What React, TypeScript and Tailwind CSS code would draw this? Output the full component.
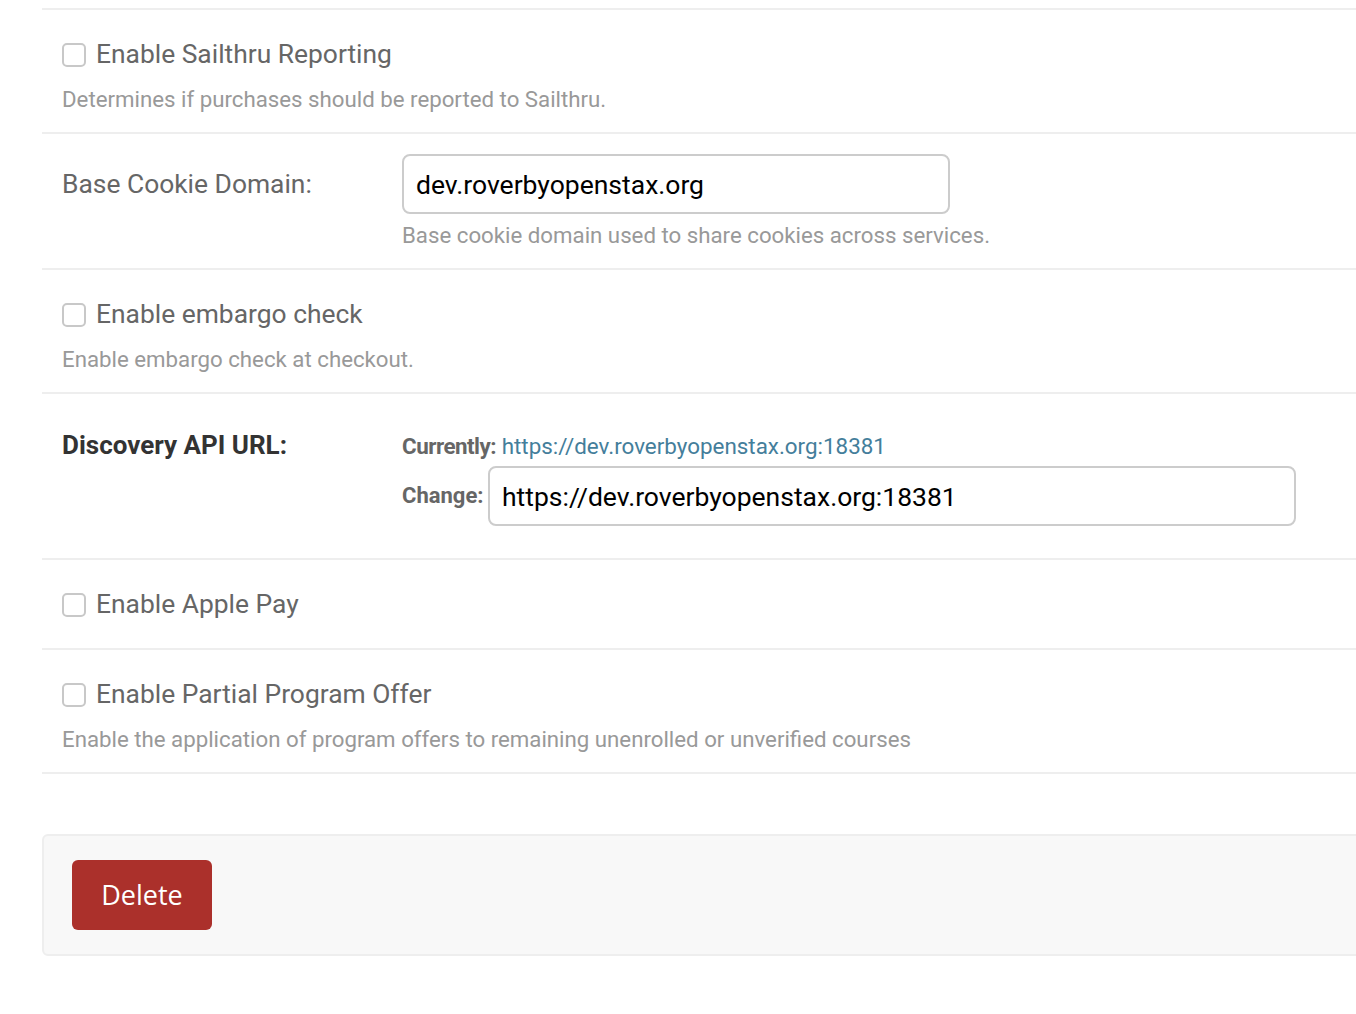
const font = { fontFamily: 'Roboto, "Liberation Sans", sans-serif' }

const Checkbox = () => (
  <span className="inline-block w-[24px] h-[24px] shrink-0 rounded-[5px] border-2 border-[#c8c8c8] bg-white" />
)

const CheckRow = ({ label, help }: { label: string; help?: string }) => (
  <div className={`border-b-2 border-[#eee] pl-[20px] pt-[20px] ${help ? 'pb-[18px]' : 'pb-[20px]'}`}>
    <div className="flex items-center gap-[10px] h-[48px] pt-[2px]">
      <Checkbox />
      <span className="text-[26.4px] text-[#666]">{label}</span>
    </div>
    {help && <div className="mt-[4px] h-[32px] leading-[34px] text-[22.25px] text-[#999]">{help}</div>}
  </div>
)

export default function App() {
  return (
    <div className="w-[1356px] h-[1014px] overflow-hidden bg-white" style={font}>
      <div className="ml-[42px] w-[1400px]">
        <div className="h-[10px] border-b-2 border-[#eee]" />

        <CheckRow label="Enable Sailthru Reporting" help="Determines if purchases should be reported to Sailthru." />

        <div className="border-b-2 border-[#eee] pl-[20px] pt-[20px] pb-[18px]">
          <div className="flex items-center">
            <div className="w-[340px] pt-[2px] text-[26.4px] text-[#666]">Base Cookie Domain:</div>
            <div className="w-[548px] h-[60px] rounded-[8px] border-2 border-[#ccc] px-[12px] pt-[2px] flex items-center text-[26.5px] text-black">
              dev.roverbyopenstax.org
            </div>
          </div>
          <div className="ml-[340px] mt-[4px] h-[32px] leading-[34px] text-[22.25px] text-[#999]">
            Base cookie domain used to share cookies across services.
          </div>
        </div>

        <CheckRow label="Enable embargo check" help="Enable embargo check at checkout." />

        <div className="border-b-2 border-[#eee] pl-[20px] pt-[36px] pb-[32px] flex">
          <div className="w-[340px] h-[32px] leading-[30px] text-[26px] font-bold text-[#333]">Discovery API URL:</div>
          <div>
            <div className="h-[32px] leading-[32px] text-[22.4px]">
              <span className="font-bold text-[#666] tracking-[-0.5px]">Currently:</span>{' '}
              <a className="text-[#447e9b]">https://dev.roverbyopenstax.org:18381</a>
            </div>
            <div className="mt-[4px] flex items-center">
              <span className="w-[86px] text-[22px] font-bold text-[#666] leading-[28px]">Change:</span>
              <div className="w-[808px] h-[60px] rounded-[8px] border-2 border-[#ccc] px-[12px] pt-[2px] flex items-center text-[26.5px] text-black">
                https://dev.roverbyopenstax.org:18381
              </div>
            </div>
          </div>
        </div>

        <CheckRow label="Enable Apple Pay" />

        <CheckRow
          label="Enable Partial Program Offer"
          help="Enable the application of program offers to remaining unenrolled or unverified courses"
        />

        <div className="mt-[60px] h-[122px] rounded-l-[6px] border-2 border-[#eee] bg-[#f8f8f8] pl-[28px] flex items-center">
          <button
            className="w-[140px] h-[70px] rounded-[6px] bg-[#ab302b] text-white text-[27px] font-medium"
            style={{ fontFamily: '"Open Sans", sans-serif' }}
          >
            Delete
          </button>
        </div>
      </div>
    </div>
  )
}
